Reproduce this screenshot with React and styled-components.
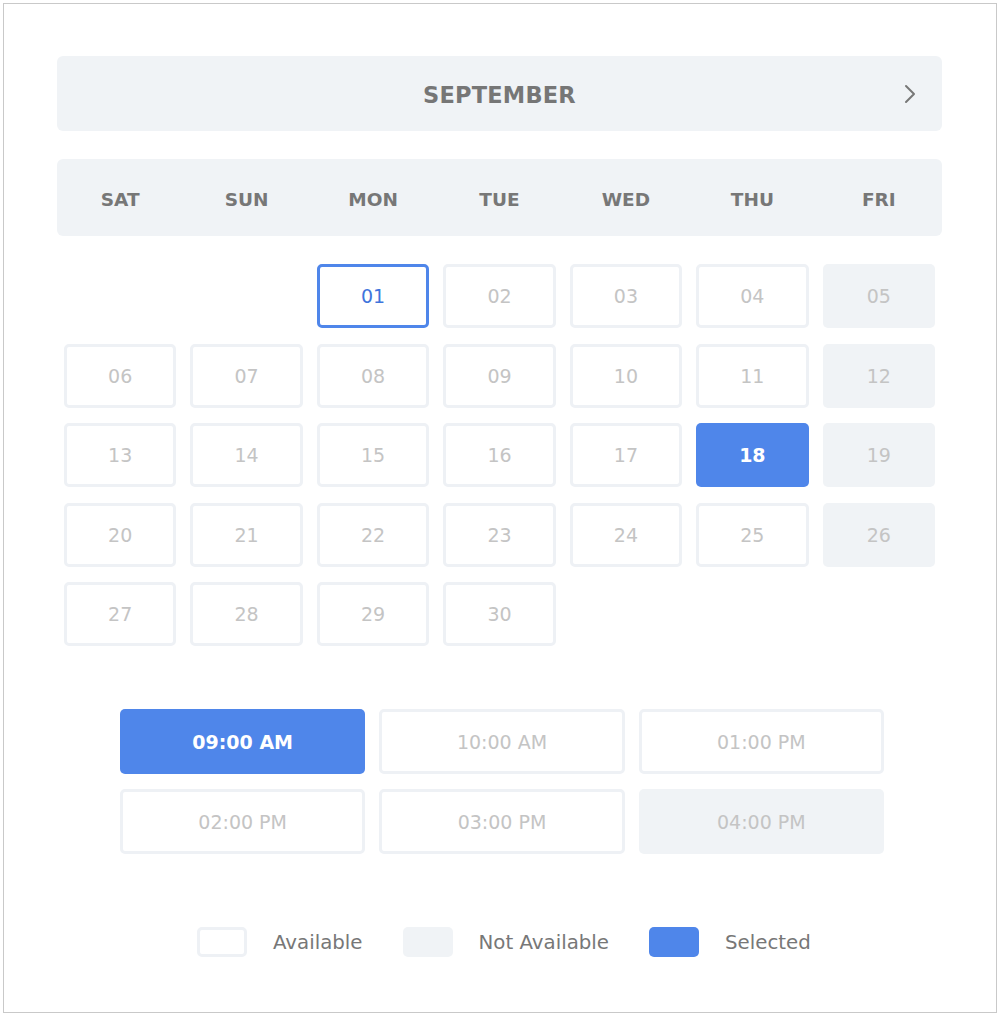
import React, { useState } from "react";
import styled, { createGlobalStyle } from "styled-components";

const GlobalStyle = createGlobalStyle`
  html, body {
    margin: 0;
    padding: 0;
    background: #fff;
  }
  body {
    font-family: "DejaVu Sans", "Open Sans", sans-serif;
  }
`;

const BLUE = "#4f86ea";
const LIGHT = "#f0f3f6";
const BORDER = "#eef1f5";

const Frame = styled.div`
  box-sizing: border-box;
  margin: 3px;
  width: 994px;
  height: 1010px;
  border: 1px solid #c9c9c9;
  padding: 52px 54px 0 53px;
  display: flex;
  flex-direction: column;
`;

const MonthBar = styled.div`
  height: 75px;
  border-radius: 6px;
  background: ${LIGHT};
  display: grid;
  grid-template-columns: 60px 1fr 60px;
  align-items: center;
`;

const MonthTitle = styled.div`
  grid-column: 2;
  padding-top: 3px;
  text-align: center;
  font-size: 22.5px;
  font-weight: 700;
  color: #767676;
  letter-spacing: 0.2px;
`;

const NextButton = styled.button`
  justify-self: end;
  margin-right: 24px;
  width: 16px;
  height: 20px;
  padding: 0;
  border: none;
  background: none;
  display: flex;
  align-items: center;
  justify-content: center;
  cursor: pointer;
`;

const DayBar = styled.div`
  margin-top: 28px;
  height: 77px;
  border-radius: 6px;
  background: ${LIGHT};
  display: grid;
  grid-template-columns: repeat(7, 1fr);
  align-items: center;
`;

const DayLabel = styled.div`
  padding-top: 4px;
  text-align: center;
  font-size: 18.5px;
  font-weight: 700;
  color: #777;
`;

const DateGrid = styled.div`
  margin-top: 28px;
  display: grid;
  grid-template-columns: repeat(7, 1fr);
  grid-auto-rows: 64px;
  row-gap: 15.5px;
`;

const DateCell = styled.button`
  box-sizing: border-box;
  margin: 0 7px;
  border-radius: 5px;
  font-family: inherit;
  font-size: 19px;
  font-weight: ${(p) => (p.$selected ? 700 : 400)};
  cursor: ${(p) => (p.$off ? "default" : "pointer")};
  border: ${(p) =>
    p.$today
      ? `3px solid ${BLUE}`
      : p.$selected || p.$off
      ? "none"
      : `3px solid ${BORDER}`};
  background: ${(p) => (p.$selected ? BLUE : p.$off ? LIGHT : "#fff")};
  color: ${(p) =>
    p.$selected ? "#fff" : p.$today ? "#3f75dc" : "#c4c4c4"};
  grid-column: ${(p) => p.$start || "auto"};
`;

const SlotGrid = styled.div`
  margin-top: 63px;
  margin-left: 63px;
  width: 764px;
  display: grid;
  grid-template-columns: repeat(3, 1fr);
  grid-auto-rows: 65px;
  column-gap: 14px;
  row-gap: 15px;
`;

const Slot = styled.button`
  box-sizing: border-box;
  border-radius: 5px;
  font-family: inherit;
  font-size: 19px;
  font-weight: ${(p) => (p.$selected ? 700 : 400)};
  cursor: ${(p) => (p.$off ? "default" : "pointer")};
  border: ${(p) => (p.$selected || p.$off ? "none" : `3px solid ${BORDER}`)};
  background: ${(p) => (p.$selected ? BLUE : p.$off ? LIGHT : "#fff")};
  color: ${(p) => (p.$selected ? "#fff" : "#c4c4c4")};
`;

const Legend = styled.div`
  margin-top: 73px;
  margin-left: 140px;
  display: flex;
  align-items: center;
  gap: 40px;
`;

const LegendItem = styled.div`
  display: flex;
  align-items: center;
  gap: 26px;
  font-size: 19.8px;
  color: #777;
`;

const Swatch = styled.span`
  box-sizing: border-box;
  width: 50px;
  height: 30px;
  border-radius: 5px;
  border: ${(p) => (p.$kind === "available" ? `3px solid ${BORDER}` : "none")};
  background: ${(p) =>
    p.$kind === "selected" ? BLUE : p.$kind === "off" ? LIGHT : "#fff"};
`;

const days = ["SAT", "SUN", "MON", "TUE", "WED", "THU", "FRI"];
const slots = [
  { t: "09:00 AM" },
  { t: "10:00 AM" },
  { t: "01:00 PM" },
  { t: "02:00 PM" },
  { t: "03:00 PM" },
  { t: "04:00 PM", off: true },
];
const fridays = [5, 12, 19, 26];

export default function App() {
  const [day, setDay] = useState(18);
  const [slot, setSlot] = useState("09:00 AM");

  const dates = [];
  for (let d = 1; d <= 30; d++) dates.push(d);

  return (
    <>
      <GlobalStyle />
      <Frame>
        <MonthBar>
          <MonthTitle>SEPTEMBER</MonthTitle>
          <NextButton aria-label="next month">
            <svg width="12" height="20" viewBox="0 0 12 20">
              <polyline
                points="2,2 10,10 2,18"
                fill="none"
                stroke="#777"
                strokeWidth="2"
                strokeLinecap="round"
                strokeLinejoin="round"
              />
            </svg>
          </NextButton>
        </MonthBar>

        <DayBar>
          {days.map((d) => (
            <DayLabel key={d}>{d}</DayLabel>
          ))}
        </DayBar>

        <DateGrid>
          {dates.map((d) => {
            const off = fridays.includes(d);
            return (
              <DateCell
                key={d}
                $start={d === 1 ? 3 : null}
                $off={off}
                $today={d === 1}
                $selected={d === day}
                onClick={() => !off && setDay(d)}
              >
                {String(d).padStart(2, "0")}
              </DateCell>
            );
          })}
        </DateGrid>

        <SlotGrid>
          {slots.map((s) => (
            <Slot
              key={s.t}
              $off={s.off}
              $selected={s.t === slot}
              onClick={() => !s.off && setSlot(s.t)}
            >
              {s.t}
            </Slot>
          ))}
        </SlotGrid>

        <Legend>
          <LegendItem>
            <Swatch $kind="available" />
            Available
          </LegendItem>
          <LegendItem>
            <Swatch $kind="off" />
            Not Available
          </LegendItem>
          <LegendItem>
            <Swatch $kind="selected" />
            Selected
          </LegendItem>
        </Legend>
      </Frame>
    </>
  );
}
